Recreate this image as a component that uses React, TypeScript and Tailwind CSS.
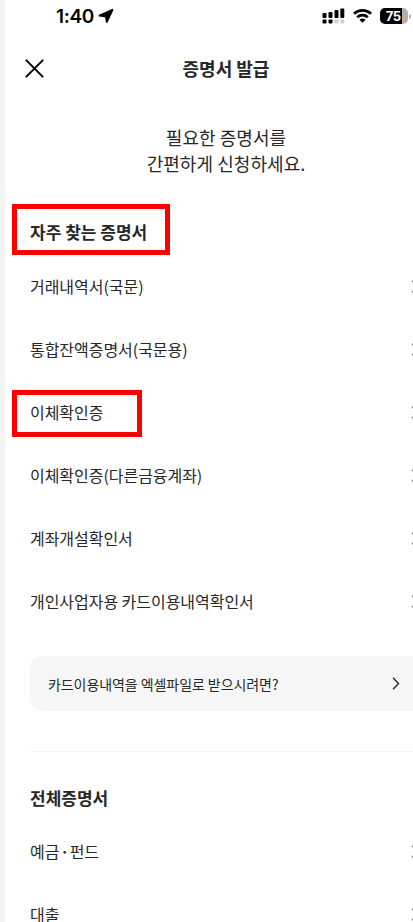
import React from "react";

const frequent = [
  { label: "거래내역서(국문)" },
  { label: "통합잔액증명서(국문용)" },
  { label: "이체확인증", marked: true },
  { label: "이체확인증(다른금융계좌)" },
  { label: "계좌개설확인서" },
  { label: "개인사업자용 카드이용내역확인서" },
];

const all = [{ label: "예금 · 펀드" }, { label: "대출" }];

const Chevron = ({ className }: { className?: string }) => (
  <svg
    width="8"
    height="13"
    viewBox="0 0 8 13"
    fill="none"
    stroke="currentColor"
    strokeWidth="1.4"
    className={`shrink-0 ${className ?? ""}`}
  >
    <path d="M1 0.8 L6.5 6.5 L1 12.2" />
  </svg>
);

const StatusBar = () => (
  <div className="flex h-8 items-center pl-[51px] text-black">
    <span className="font-['Inter','Liberation_Sans',sans-serif] text-[19px] leading-none font-semibold tracking-[-0.3px]">
      1:40
    </span>
    <svg width="16" height="16" viewBox="0 0 16 16" className="ml-1" fill="currentColor">
      <path
        d="M14.4 1.8 L8.8 13.8 L8 8.4 L1.6 7.6 Z"
        stroke="currentColor"
        strokeWidth="2"
        strokeLinejoin="round"
      />
    </svg>
    <svg width="23" height="16" viewBox="0 0 23 16" className="ml-[208px]">
      <rect x="0.5" y="5" width="4" height="5" rx="1" />
      <rect x="6.5" y="4" width="4" height="6" rx="1" />
      <rect x="12.5" y="2" width="4" height="8" rx="1" />
      <rect x="18.3" y="0.5" width="4" height="9.5" rx="1" />
      <rect x="0.5" y="11.5" width="4" height="4" rx="1" />
      <rect x="6.5" y="11.5" width="4" height="4" rx="1" />
      <rect x="12.5" y="11.5" width="4" height="4" rx="1" fill="#d0d0d0" />
      <rect x="18.3" y="11.5" width="4" height="4" rx="1" fill="#d0d0d0" />
    </svg>
    <svg
      width="19"
      height="14"
      viewBox="0 0 19 14"
      className="ml-2"
      fill="none"
      stroke="currentColor"
      strokeWidth="2.7"
    >
      <path d="M1 4.8 C5.8 0.3 13.2 0.3 18 4.8" />
      <path d="M4.2 8.3 C7.2 5.5 11.8 5.5 14.8 8.3" />
      <path d="M9.5 13.8 L6.4 10.8 Q9.5 8.2 12.6 10.8 Z" fill="currentColor" stroke="none" />
    </svg>
    <div className="ml-2 flex items-center">
      <div className="flex h-4 w-[28px] items-center justify-center rounded-[5px] bg-linear-to-r from-black from-78% to-[#b0b0b0] to-78% pr-0.5 font-['Inter','Liberation_Sans',sans-serif] text-[13px] leading-none font-bold tracking-[-0.6px] text-white">
        75
      </div>
      <div className="ml-px h-[5px] w-[2px] rounded-r-full bg-[#b8b8b8]" />
    </div>
  </div>
);

const Row = ({ label, marked }: { label: string; marked?: boolean }) => {
  const [first, second] = label.split(" · ");

  return (
    <div className="relative flex h-[63px] items-center justify-between pl-[25px]">
      {marked && (
        <div className="absolute top-[9px] left-[7px] h-[47px] w-[130px] border-5 border-[#ff0000]" />
      )}
      <span className="pb-0.5 text-base leading-6 tracking-[-0.04px]">
        {first}
        {second && (
          <>
            <span className="mx-[2.5px] font-['Inter',sans-serif] leading-none font-bold">·</span>
            {second}
          </>
        )}
      </span>
      <Chevron className="-mr-[6px] text-[#777]" />
    </div>
  );
};

const App = () => {
  return (
    <div className="h-[922px] w-full overflow-hidden border-l-5 border-[#f4f4f4] bg-white font-['Noto_Sans_CJK_KR',sans-serif] whitespace-nowrap text-[#272727]">
      <StatusBar />

      <header className="relative flex h-[72px] items-center justify-center pl-[34px]">
        <svg
          width="20"
          height="20"
          viewBox="0 0 20 20"
          className="absolute top-[27px] left-5 text-black"
          stroke="currentColor"
          strokeWidth="2"
          strokeLinecap="round"
        >
          <path d="M1.4 1.4 L17.6 17.6 M17.6 1.4 L1.4 17.6" />
        </svg>
        <h1 className="text-lg font-bold">증명서 발급</h1>
      </header>

      <p className="mt-5 pl-[34px] text-center text-lg leading-[26px] tracking-[0.06px]">
        필요한 증명서를
        <br />
        간편하게 신청하세요.
      </p>

      <section className="mt-[28px]">
        <div className="ml-[7px] flex h-[51px] w-[158px] items-center border-5 border-[#ff0000] pt-[5px] pl-[13px]">
          <h2 className="text-[17px] leading-6 font-bold">자주 찾는 증명서</h2>
        </div>
        {frequent.map((item) => (
          <Row key={item.label} {...item} />
        ))}
      </section>

      <div className="mt-[23px] ml-[25px] flex h-[55px] items-center justify-between rounded-l-xl bg-[#f6f6f6] pr-[13px] pl-[18px]">
        <span className="text-sm tracking-[-0.07px]">카드이용내역을 엑셀파일로 받으시려면?</span>
        <Chevron />
      </div>

      <hr className="mt-10 ml-[25px] border-[#f4f4f4]" />

      <section className="mt-[34px]">
        <h2 className="pl-[25px] text-[17px] leading-6 font-bold">전체증명서</h2>
        <div className="mt-[10px]">
          {all.map((item) => (
            <Row key={item.label} {...item} />
          ))}
        </div>
      </section>
    </div>
  );
};

export default App;
